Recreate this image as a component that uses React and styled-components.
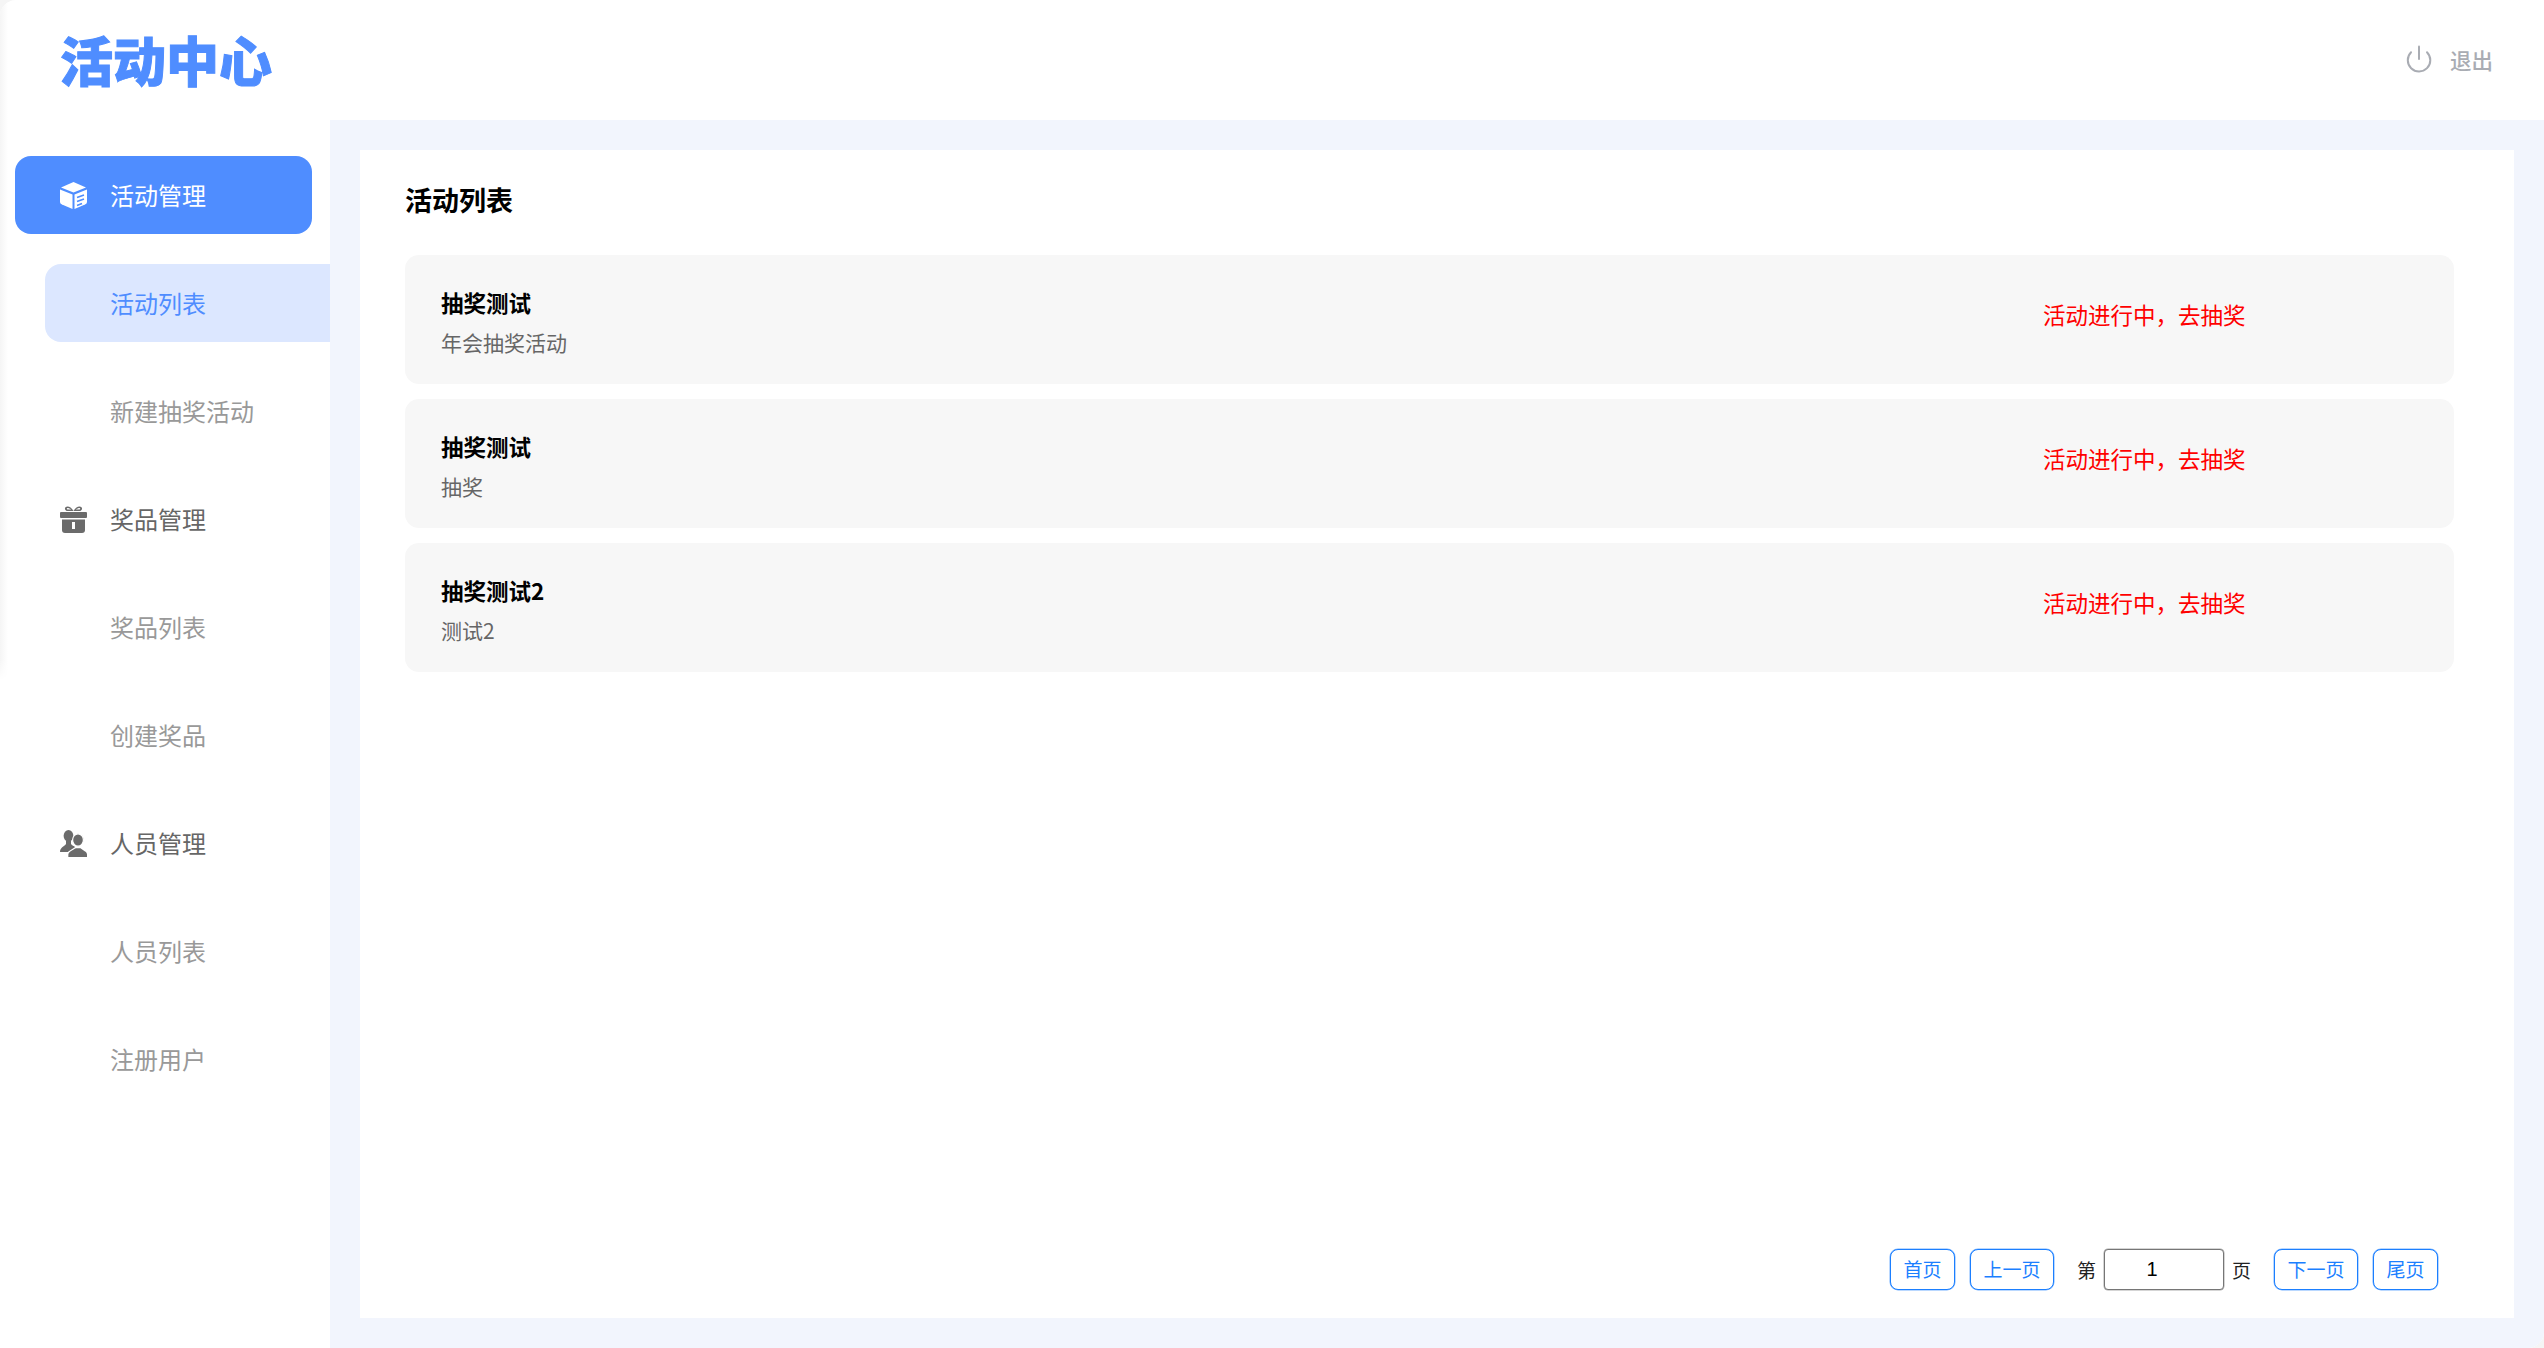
import styled, { createGlobalStyle } from "styled-components";
import { Power } from "lucide-react";

const GlobalStyle = createGlobalStyle`
  html, body {
    margin: 0;
    padding: 0;
    background: #f5f5f5;
  }
  body {
    font-family: "Noto Sans CJK SC", "Liberation Sans", sans-serif;
  }
`;

const activities = [
  { name: "抽奖测试", desc: "年会抽奖活动" },
  { name: "抽奖测试", desc: "抽奖" },
  { name: "抽奖测试2", desc: "测试2" },
];

function BoxIcon() {
  return (
    <svg width="27" height="27" viewBox="0 0 27 27">
      <path d="M13.5 0 L26 5.5 L13.5 10.5 L1 5.5 Z" fill="#fff" />
      <path d="M0 7.5 L12.5 12.5 V27 L2 22.5 Q0 21.5 0 20 Z" fill="#fff" />
      <path d="M27 7.5 L14.5 12.5 V27 L25 22.5 Q27 21.5 27 20 Z" fill="#fff" />
      <path d="M17 15.5 L24 13 M17 19.5 L24 17 M17 23.5 L22 21.5" stroke="#4f8dff" strokeWidth="1.6" fill="none" />
    </svg>
  );
}

function GiftIcon() {
  return (
    <svg width="27" height="27" viewBox="0 0 27 27">
      <path d="M8 5 C4 5 4 0.5 7.5 0.5 C10 0.5 12.5 3 13.5 5 C14.5 3 17 0.5 19.5 0.5 C23 0.5 23 5 19 5 Z M8 3.5 H11 C10 2.5 8.5 2 7.5 2 C6.5 2 6.5 3.5 8 3.5 Z M19 3.5 H16 C17 2.5 18.5 2 19.5 2 C20.5 2 20.5 3.5 19 3.5 Z" fill="#6b6b6b" fillRule="evenodd" />
      <rect x="0" y="6" width="27" height="6" rx="1" fill="#6b6b6b" />
      <path d="M2 13.5 H25 V24 Q25 27 22 27 H5 Q2 27 2 24 Z" fill="#6b6b6b" />
      <rect x="12" y="16" width="3" height="7" fill="#fff" />
    </svg>
  );
}

function PeopleIcon() {
  return (
    <svg width="27" height="27" viewBox="0 0 27 27">
      <ellipse cx="8.5" cy="5.8" rx="4.9" ry="5.8" fill="#6b6b6b" />
      <path d="M0 22 C0 17.5 4 16.5 6 14 V11 H11 V14 C12 15.5 14 16 15 17 V22 Z" fill="#6b6b6b" />
      <ellipse cx="18" cy="10" rx="5.4" ry="6.2" fill="#6b6b6b" stroke="#fff" strokeWidth="1.2" />
      <path d="M8.2 27 V24.5 C8.2 21.5 13 20.5 15.5 18.2 H20.5 C23 20.5 27 21.5 27 24.5 V27 Z" fill="#6b6b6b" />
      <path d="M7.6 27 V24.2 C7.6 21 12.5 20.2 15 17.8" fill="none" stroke="#fff" strokeWidth="1.2" />
    </svg>
  );
}

export default function App() {
  return (
    <>
      <GlobalStyle />
      <Page>
        <Header>
          <Logo>活动中心</Logo>
          <Logout>
            <Power size={30} strokeWidth={1.6} color="#a9acb3" />
            <span>退出</span>
          </Logout>
        </Header>
        <Body>
          <Sidebar>
            <MenuGroup $active>
              <BoxIcon />
              <MenuLabel>活动管理</MenuLabel>
            </MenuGroup>
            <SubItem $active>活动列表</SubItem>
            <SubItem>新建抽奖活动</SubItem>
            <MenuGroup>
              <GiftIcon />
              <MenuLabel>奖品管理</MenuLabel>
            </MenuGroup>
            <SubItem>奖品列表</SubItem>
            <SubItem>创建奖品</SubItem>
            <MenuGroup>
              <PeopleIcon />
              <MenuLabel>人员管理</MenuLabel>
            </MenuGroup>
            <SubItem>人员列表</SubItem>
            <SubItem>注册用户</SubItem>
          </Sidebar>
          <Main>
            <Card>
              <Title>活动列表</Title>
              <List>
                {activities.map((a, i) => (
                  <Row key={i}>
                    <RowText>
                      <RowName>{a.name}</RowName>
                      <RowDesc>{a.desc}</RowDesc>
                    </RowText>
                    <RowLink>活动进行中，去抽奖</RowLink>
                  </Row>
                ))}
              </List>
              <Pager>
                <PageButton>首页</PageButton>
                <PageButton>上一页</PageButton>
                <PageJump>
                  第<PageInput defaultValue="1" />页
                </PageJump>
                <PageButton>下一页</PageButton>
                <PageButton>尾页</PageButton>
              </Pager>
            </Card>
          </Main>
        </Body>
      </Page>
    </>
  );
}

const Page = styled.div`
  position: relative;
  width: 2544px;
  height: 1348px;
  display: flex;
  flex-direction: column;
  overflow: hidden;
  background: #fff;
  border-radius: 16px 0 16px 0;

  &::before {
    content: "";
    position: absolute;
    top: 0;
    left: 0;
    width: 8px;
    height: 680px;
    background: linear-gradient(to right, #f5f5f5, #fff);
    mask-image: linear-gradient(to bottom, #000 97%, transparent);
  }
`;

const Header = styled.header`
  height: 120px;
  flex: none;
  box-sizing: border-box;
  display: flex;
  align-items: center;
  justify-content: space-between;
  padding: 0 51px 2px 60px;
`;

const Logo = styled.div`
  font-size: 53px;
  font-weight: 900;
  line-height: 60px;
  color: #4f8dff;
  -webkit-text-stroke: 1px #4f8dff;
`;

const Logout = styled.div`
  display: flex;
  align-items: center;
  gap: 16px;
  font-size: 21.5px;
  font-weight: 500;
  color: #a9acb3;
`;

const Body = styled.div`
  flex: 1;
  display: flex;
  min-height: 0;
`;

const Sidebar = styled.nav`
  width: 330px;
  flex: none;
  padding-top: 36px;
  display: flex;
  flex-direction: column;
  gap: 30px;
`;

const MenuGroup = styled.div`
  height: 78px;
  margin: 0 18px 0 15px;
  padding-left: 45px;
  display: flex;
  align-items: center;
  gap: 23px;
  border-radius: 16px;
  font-size: 24px;
  color: ${(p) => (p.$active ? "#fff" : "#666")};
  background: ${(p) => (p.$active ? "#4f8dff" : "transparent")};
`;

const MenuLabel = styled.span`
  margin-bottom: 2px;
`;

const SubItem = styled.div`
  height: 78px;
  box-sizing: border-box;
  margin-left: 45px;
  padding: 0 0 2px 65px;
  display: flex;
  align-items: center;
  border-radius: 16px 0 0 16px;
  font-size: 24px;
  color: ${(p) => (p.$active ? "#4f8dff" : "#999")};
  background: ${(p) => (p.$active ? "#dce7ff" : "transparent")};
`;

const Main = styled.main`
  flex: 1;
  display: flex;
  padding: 30px;
  background: #f2f5fd;
`;

const Card = styled.section`
  flex: 1;
  display: flex;
  flex-direction: column;
  padding: 30px 60px 28px 45px;
  background: #fff;
`;

const Title = styled.h2`
  margin: 0;
  font-size: 27px;
  line-height: 40px;
  font-weight: 700;
  color: #000;
`;

const List = styled.div`
  flex: 1;
  margin-top: 35px;
  display: flex;
  flex-direction: column;
  gap: 15px;
`;

const Row = styled.div`
  height: 129px;
  display: flex;
  align-items: center;
  padding-left: 36px;
  border-radius: 14px;
  background: #f7f7f7;
`;

const RowText = styled.div`
  width: 1602px;
  padding-top: 4px;
  display: flex;
  flex-direction: column;
  gap: 10px;
`;

const RowName = styled.div`
  font-size: 22.5px;
  line-height: 30px;
  font-weight: 700;
  color: #000;
`;

const RowDesc = styled.div`
  font-size: 21px;
  line-height: 30px;
  color: #666;
`;

const RowLink = styled.div`
  padding-bottom: 12px;
  font-size: 22.5px;
  color: #f00;
`;

const Pager = styled.div`
  display: flex;
  align-items: center;
  justify-content: flex-end;
  gap: 15px;
  padding-right: 16px;
`;

const PageButton = styled.button`
  height: 41px;
  padding: 0 12.5px 2px;
  border: 1px solid #1b7fff;
  box-shadow: 0 0 0 0.5px rgba(27, 127, 255, 0.6);
  border-radius: 8px;
  background: #fff;
  color: #1b7fff;
  font-family: inherit;
  font-size: 19px;
`;

const PageJump = styled.div`
  display: flex;
  align-items: center;
  gap: 8px;
  margin: 0 8px;
  font-size: 19px;
  color: #222;
`;

const PageInput = styled.input`
  width: 120px;
  height: 41px;
  box-sizing: border-box;
  padding: 0 24px 0 0;
  border: 1px solid #767676;
  box-shadow: 0 0 0 0.5px rgba(118, 118, 118, 0.6);
  border-radius: 4px;
  text-align: center;
  font-family: "Liberation Sans", sans-serif;
  font-size: 20px;
  color: #000;
`;
